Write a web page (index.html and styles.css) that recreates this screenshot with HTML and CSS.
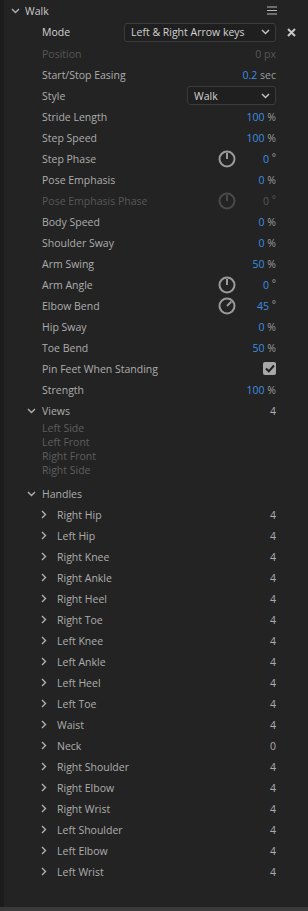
FILE: index.html
```html
<!DOCTYPE html>
<html lang="en">
<head>
    <meta charset="UTF-8">
    <meta name="viewport" content="width=device-width, initial-scale=1.0">
    <title>Walk</title>
    <link rel="stylesheet" href="styles.css">
</head>
<body>
    <div class="panel">
        <div class="header">
            <svg class="chev" width="9" height="6" viewBox="0 0 9 6"><path d="M1 1l3.5 3.5L8 1" fill="none" stroke="#b0b0b0" stroke-width="1.4"/></svg>
            <span class="title">Walk</span>
            <svg class="menu" width="10" height="9" viewBox="0 0 10 9"><path d="M0 1h10M0 4.5h10M0 8h10" stroke="#b8b8b8" stroke-width="1.2"/></svg>
        </div>

        <div class="row mode-row">
            <span class="label bright">Mode</span>
            <div class="select wide">
                <span>Left &amp; Right Arrow keys</span>
                <svg width="9" height="6" viewBox="0 0 9 6"><path d="M1 1l3.5 3.5L8 1" fill="none" stroke="#c0c0c0" stroke-width="1.5"/></svg>
            </div>
            <svg class="close" width="9" height="9" viewBox="0 0 9 9"><path d="M1 1l7 7M8 1l-7 7" stroke="#c8c8c8" stroke-width="2"/></svg>
        </div>
        <div class="row disabled"><span class="label">Position</span><span class="value">0 <em>px</em></span></div>
        <div class="row"><span class="label">Start/Stop Easing</span><span class="value"><b>0.2</b> <em>sec</em></span></div>
        <div class="row">
            <span class="label">Style</span>
            <div class="select narrow">
                <span>Walk</span>
                <svg width="9" height="6" viewBox="0 0 9 6"><path d="M1 1l3.5 3.5L8 1" fill="none" stroke="#c0c0c0" stroke-width="1.5"/></svg>
            </div>
        </div>
        <div class="row"><span class="label">Stride Length</span><span class="value"><b>100</b> <em>%</em></span></div>
        <div class="row"><span class="label">Step Speed</span><span class="value"><b>100</b> <em>%</em></span></div>
        <div class="row">
            <span class="label">Step Phase</span>
            <svg class="knob" width="18" height="18" viewBox="0 0 18 18"><circle cx="9" cy="9" r="7.5" fill="none" stroke="#9a9a9a" stroke-width="2"/><path d="M9 9V3" stroke="#9a9a9a" stroke-width="2"/></svg>
            <span class="value knobval"><b>0</b> <em class="deg">°</em></span>
        </div>
        <div class="row"><span class="label">Pose Emphasis</span><span class="value"><b>0</b> <em>%</em></span></div>
        <div class="row disabled">
            <span class="label">Pose Emphasis Phase</span>
            <svg class="knob" width="18" height="18" viewBox="0 0 18 18"><circle cx="9" cy="9" r="7.5" fill="none" stroke="#4a4a4a" stroke-width="2"/><path d="M9 9V3" stroke="#4a4a4a" stroke-width="2"/></svg>
            <span class="value knobval">0 <em class="deg">°</em></span>
        </div>
        <div class="row"><span class="label">Body Speed</span><span class="value"><b>0</b> <em>%</em></span></div>
        <div class="row"><span class="label">Shoulder Sway</span><span class="value"><b>0</b> <em>%</em></span></div>
        <div class="row"><span class="label">Arm Swing</span><span class="value"><b>50</b> <em>%</em></span></div>
        <div class="row">
            <span class="label">Arm Angle</span>
            <svg class="knob" width="18" height="18" viewBox="0 0 18 18"><circle cx="9" cy="9" r="7.5" fill="none" stroke="#9a9a9a" stroke-width="2"/><path d="M9 9V3" stroke="#9a9a9a" stroke-width="2"/></svg>
            <span class="value knobval"><b>0</b> <em class="deg">°</em></span>
        </div>
        <div class="row">
            <span class="label">Elbow Bend</span>
            <svg class="knob" width="18" height="18" viewBox="0 0 18 18"><circle cx="9" cy="9" r="7.5" fill="none" stroke="#9a9a9a" stroke-width="2"/><path d="M9 9L13.2 4.8" stroke="#9a9a9a" stroke-width="2"/></svg>
            <span class="value knobval"><b>45</b> <em class="deg">°</em></span>
        </div>
        <div class="row"><span class="label">Hip Sway</span><span class="value"><b>0</b> <em>%</em></span></div>
        <div class="row"><span class="label">Toe Bend</span><span class="value"><b>50</b> <em>%</em></span></div>
        <div class="row">
            <span class="label">Pin Feet When Standing</span>
            <span class="check"><svg width="10" height="9" viewBox="0 0 10 9"><path d="M1 4.5l2.8 2.8L9 1.5" fill="none" stroke="#1e1e1e" stroke-width="2"/></svg></span>
        </div>
        <div class="row"><span class="label">Strength</span><span class="value"><b>100</b> <em>%</em></span></div>

        <div class="row group">
            <svg class="chev" width="9" height="6" viewBox="0 0 9 6"><path d="M1 1l3.5 3.5L8 1" fill="none" stroke="#b0b0b0" stroke-width="1.4"/></svg>
            <span class="label">Views</span>
            <span class="count">4</span>
        </div>
        <ul class="views">
            <li>Left Side</li>
            <li>Left Front</li>
            <li>Right Front</li>
            <li>Right Side</li>
        </ul>

        <div class="row group">
            <svg class="chev" width="9" height="6" viewBox="0 0 9 6"><path d="M1 1l3.5 3.5L8 1" fill="none" stroke="#b0b0b0" stroke-width="1.4"/></svg>
            <span class="label">Handles</span>
        </div>
        <div id="handles"></div>
    </div>
    <div class="footer"></div>

    <script>
        const handles = [
            ['Right Hip', 4], ['Left Hip', 4], ['Right Knee', 4], ['Right Ankle', 4],
            ['Right Heel', 4], ['Right Toe', 4], ['Left Knee', 4], ['Left Ankle', 4],
            ['Left Heel', 4], ['Left Toe', 4], ['Waist', 4], ['Neck', 0],
            ['Right Shoulder', 4], ['Right Elbow', 4], ['Right Wrist', 4],
            ['Left Shoulder', 4], ['Left Elbow', 4], ['Left Wrist', 4]
        ];

        const list = document.getElementById('handles');
        handles.forEach(([name, count]) => {
            const row = document.createElement('div');
            row.className = 'row handle';
            row.innerHTML = `
                <svg class="chev" width="6" height="9" viewBox="0 0 6 9"><path d="M1 1l3.5 3.5L1 8" fill="none" stroke="#b0b0b0" stroke-width="1.4"/></svg>
                <span class="label">${name}</span>
                <span class="count">${count}</span>
            `;
            list.appendChild(row);
        });
    </script>
</body>
</html>
```

FILE: styles.css
```css
html, body {
    margin: 0;
    height: 911px;
}
body {
    display: flex;
    flex-direction: column;
    background-color: #232323;
    font-family: "Open Sans", sans-serif;
    font-size: 10.5px;
    color: #adadad;
    overflow: hidden;
}
.panel {
    flex: 1;
    border-left: 4px solid #1c1c1c;
    padding-right: 32px;
}
.footer {
    height: 4px;
    background: #3a3a3a;
}
.header {
    display: flex;
    align-items: center;
    height: 21px;
    padding-left: 7px;
}
.header .title {
    margin-left: 5px;
    color: #cacaca;
}
.header .menu {
    margin-left: auto;
    margin-right: -1px;
}
.row {
    display: flex;
    align-items: center;
    height: 21px;
    padding-left: 38px;
}
.mode-row {
    height: 22px;
    position: relative;
}
.label {
    white-space: nowrap;
}
.bright {
    color: #d4d4d4;
}
.disabled, .disabled .value, .disabled em {
    color: #575757;
}
.value {
    margin-left: auto;
    color: #9c9c9c;
}
.value b {
    font-weight: normal;
    color: #3e8ee0;
}
.value em {
    font-style: normal;
}
.value .deg {
    font-size: 10px;
    position: relative;
    top: -2px;
}
.knob {
    margin-left: auto;
}
.knobval {
    margin-left: 0;
    width: 40px;
    text-align: right;
}
.select {
    margin-left: auto;
    display: flex;
    align-items: center;
    justify-content: space-between;
    height: 19px;
    padding: 0 5px 0 6px;
    background: #1f1f1f;
    border: 1px solid #3b3b3b;
    border-radius: 3px;
    color: #d2d2d2;
    box-sizing: border-box;
    white-space: nowrap;
}
.select.wide {
    width: 152px;
}
.select.narrow {
    width: 89px;
}
.close {
    position: absolute;
    right: -20px;
    top: 7px;
}
.check {
    margin-left: auto;
    width: 13px;
    height: 13px;
    border-radius: 2px;
    background: #a8a8a8;
    display: flex;
    align-items: center;
    justify-content: center;
}
.group {
    padding-left: 23px;
}
.group .chev {
    margin-right: 6px;
}
.count {
    margin-left: auto;
    color: #adadad;
}
.views {
    list-style: none;
    margin: 0 0 6px;
    padding-left: 38px;
    color: #5e5e5e;
    line-height: 14px;
}
.handle {
    padding-left: 37px;
}
.handle .chev {
    margin-right: 10px;
}
```
